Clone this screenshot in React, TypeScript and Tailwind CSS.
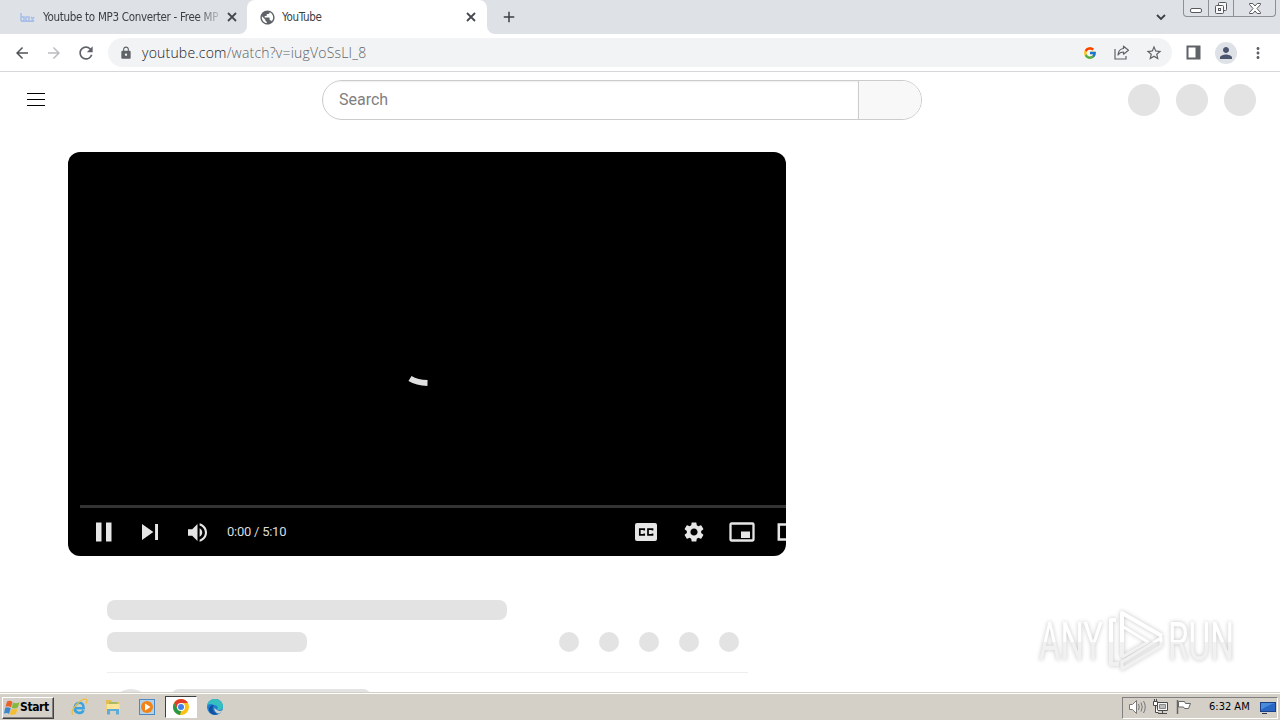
import React from 'react';
import {
    MdArrowBack, MdArrowForward, MdRefresh, MdLock, MdPublic, MdAdd,
    MdStarBorder, MdPerson, MdMoreVert, MdSettings,
} from 'react-icons/md';
import { FcGoogle } from 'react-icons/fc';

const CloseIcon = () => (
    <svg width="10" height="10" viewBox="0 0 10 10" className="shrink-0">
        <path d="M1 1l8 8M9 1L1 9" stroke="#45494d" strokeWidth="1.800" />
    </svg>
);

const TabStrip = () => (
    <div className="flex h-[34px] shrink-0 bg-white font-['DejaVu_Sans_Condensed','DejaVu_Sans',sans-serif] text-[11.5px] text-[#3c4043]">
        <div className="flex h-[34px] w-[247px] items-center rounded-br-[8px] bg-[#dee1e6] pl-5">
            <svg width="15" height="10" viewBox="0 0 15 10" className="shrink-0">
                <path d="M1 1v8M1 5h3v4H1M6 5h3v4H6zM11 5l3 4M14 5l-3 4M1 9.400h13" fill="none" stroke="#a5bde8" strokeWidth="1.500" />
            </svg>
            <div className="ml-2 w-[176px] pt-px whitespace-nowrap tracking-[-0.3px] [mask-image:linear-gradient(to_right,black_88%,rgba(0,0,0,0.2))]">
                Youtube to MP3 Converter - Free MP
            </div>
            <div className="ml-2">
                <CloseIcon />
            </div>
        </div>
        <div className="w-[240px] bg-[#dee1e6]">
            <div className="flex h-full items-center rounded-t-[8px] bg-white pl-3">
                <MdPublic className="size-[17px] text-[#5f6368]" />
                <span className="ml-1.5 pt-px tracking-[-0.3px]">YouTube</span>
                <div className="mr-[11px] ml-auto">
                    <CloseIcon />
                </div>
            </div>
        </div>
        <div className="flex flex-1 rounded-bl-[8px] bg-[#dee1e6]">
            <div className="flex flex-1 items-center pl-[13px]">
                <MdAdd className="size-[18px]" />
            </div>
            <svg width="10" height="7" viewBox="0 0 10 7" className="mt-[14px] mr-[17px]">
                <path d="M1 1l4 4 4-4" fill="none" stroke="#3c4043" strokeWidth="1.800" />
            </svg>
            <div className="mr-1 flex h-[17px] w-[93px] rounded-b-[4px] border border-t-0 border-[#8d9096] text-[#55595e]">
                <div className="flex w-[25px] items-center justify-center border-r border-[#8d9096]">
                    <svg width="13" height="13" viewBox="0 0 13 13" fill="none" stroke="currentColor">
                        <rect x="0.500" y="6.500" width="11" height="4" rx="1.500" fill="#fff" />
                    </svg>
                </div>
                <div className="flex w-[25px] items-center justify-center border-r border-[#8d9096]">
                    <svg width="13" height="13" viewBox="0 0 13 13" fill="#f8f8f9" stroke="currentColor">
                        <rect x="3.500" y="0.500" width="8" height="8" rx="1" />
                        <rect x="0.500" y="3.500" width="8" height="8" rx="1" />
                        <rect x="3.500" y="6.500" width="2" height="2" />
                    </svg>
                </div>
                <div className="flex flex-1 items-center justify-center">
                    <svg width="12" height="11" viewBox="0 0 12 11" fill="#fff" stroke="currentColor">
                        <path d="M.5 .5h3.300L6 3 8.200 .5h3.300v1L8 5.500l3.500 4v1H8.200L6 8l-2.200 2.500H.5v-1L4 5.500.5 1.500z" />
                    </svg>
                </div>
            </div>
        </div>
    </div>
);

const Toolbar = () => (
    <div className="flex h-[38px] shrink-0 items-center border-b border-[#d5d7da] bg-white pl-[13px] text-[#5f6368]">
        <MdArrowBack className="size-[18px] text-[#505458]" />
        <MdArrowForward className="ml-[14px] size-[18px] text-[#babcbe]" />
        <MdRefresh className="ml-[13px] size-5" />
        <div className="ml-[12px] flex h-[29px] w-[1064px] items-center rounded-full bg-[#f1f3f4] pl-[11px]">
            <MdLock className="size-[14px]" />
            <div className="ml-[9px] font-['Open_Sans',sans-serif] text-[14px] font-light tracking-[0.2px] text-[#5f6368]">
                <span className="text-[#202124]">youtube.com</span>/watch?v=iugVoSsLI_8
            </div>
            <div className="ml-auto flex items-center pr-[9px]">
                <FcGoogle className="size-[14px]" />
                <svg width="16" height="15" viewBox="0 0 16 15" fill="none" stroke="currentColor" strokeWidth="1.200" className="ml-[17px]">
                    <path d="M1 4v10h11v-3" />
                    <path d="M9.500 1.200l5 4-5 4V7C7 7 5.200 8 4 10c.2-3.500 2-6 5.500-6.500z" strokeLinejoin="round" />
                </svg>
                <MdStarBorder className="ml-[15px] size-[18px]" />
            </div>
        </div>
        <svg width="15" height="15" viewBox="0 0 15 15" className="ml-[14px]">
            <path d="M1.500 1.500h12v12h-12z" fill="none" stroke="currentColor" strokeWidth="2" />
            <path d="M9.500 1h4.500v13H9.500z" fill="currentColor" />
        </svg>
        <div className="ml-[14px] flex size-[22px] items-center justify-center rounded-full bg-[#dee1e6]">
            <MdPerson className="size-[18px] text-[#4a5570]" />
        </div>
        <MdMoreVert className="ml-[12px] size-[18px]" />
    </div>
);

const Masthead = () => (
    <div className="flex h-14 items-center">
        <div className="-mt-0.5 ml-[27px] flex h-[13px] w-[18px] flex-col justify-between">
            <div className="h-px bg-black" />
            <div className="h-px bg-black" />
            <div className="h-px bg-black" />
        </div>
        <div className="ml-[277px] flex h-10 w-[600px] overflow-hidden rounded-full border border-[#ccc]">
            <div className="flex w-[536px] items-center border-r border-[#ccc] pl-4 font-[Roboto,sans-serif] text-[16px] text-[#808080] shadow-[inset_0_1px_2px_#eee]">
                Search
            </div>
            <div className="flex-1 bg-[#f8f8f8]" />
        </div>
        <div className="mr-6 ml-auto flex gap-4">
            <div className="size-8 rounded-full bg-[#e3e3e3]" />
            <div className="size-8 rounded-full bg-[#e3e3e3]" />
            <div className="size-8 rounded-full bg-[#e3e3e3]" />
        </div>
    </div>
);

const Player = () => (
    <div className="mt-6 ml-[68px] flex h-[404px] w-[718px] flex-col overflow-hidden rounded-[12px] bg-black text-[#e6e6e6]">
        <div className="flex h-[353px] items-center justify-center">
            <svg width="64" height="64" viewBox="0 0 64 64" className="mt-[67px]">
                <path d="M15 48.500Q22 52.700 32.500 53" fill="none" stroke="#e0e0e0" strokeWidth="6" />
            </svg>
        </div>
        <div className="ml-3 h-[3px] shrink-0 bg-[#333]" />
        <div className="flex h-12 w-[766px] shrink-0 items-center pl-3">
            <div className="flex w-[47px] justify-center">
                <svg width="16" height="20" viewBox="0 0 16 20" fill="currentColor">
                    <path d="M0 .5h5.500v19H0zM10 .5h5.500v19H10z" />
                </svg>
            </div>
            <div className="flex w-[46px] justify-center">
                <svg width="16" height="16" viewBox="12 12 12 12" fill="currentColor">
                    <path d="M12 24l8.500-6L12 12zM21.800 12v12H24V12z" />
                </svg>
            </div>
            <div className="flex w-[47px] justify-center pl-px">
                <svg width="19" height="19" viewBox="8 9 18 18" fill="currentColor">
                    <path d="M8 21h4l5 5V10l-5 5H8zM19 14v8c1.480-.68 2.500-2.230 2.500-4 0-1.740-1.020-3.260-2.500-4zM19 11.290c2.890.86 5 3.540 5 6.710s-2.110 5.850-5 6.710v2.060c4.010-.91 7-4.490 7-8.770s-2.990-7.860-7-8.770z" />
                </svg>
            </div>
            <span className="ml-[7px] font-[Roboto,sans-serif] text-[13px] tracking-[-0.25px] text-[#ddd]">0:00 / 5:10</span>
            <div className="ml-auto flex">
                <div className="flex size-12 items-center justify-center">
                    <svg width="22" height="18" viewBox="0 0 22 18">
                        <rect width="22" height="18" rx="2" fill="currentColor" />
                        <path d="M9.200 7.500V6.200H4.800v5.600h4.400v-1.300M17.500 7.500V6.200H13v5.600h4.500v-1.300" fill="none" stroke="#000" strokeWidth="1.700" />
                    </svg>
                </div>
                <div className="flex size-12 items-center justify-center">
                    <MdSettings className="size-6" />
                </div>
                <div className="flex size-12 items-center justify-center">
                    <svg width="26" height="20" viewBox="0 0 26 20">
                        <rect x="1.500" y="1.500" width="23" height="17" rx="1" fill="none" stroke="currentColor" strokeWidth="2.300" />
                        <path d="M12 9.500h9V16h-9z" fill="currentColor" />
                    </svg>
                </div>
                <div className="flex size-12 items-center justify-center">
                    <svg width="26" height="18" viewBox="0 0 26 18">
                        <rect x="1.800" y="1.500" width="22.500" height="15" fill="none" stroke="currentColor" strokeWidth="2.500" />
                    </svg>
                </div>
                <div className="w-[20px]" />
            </div>
        </div>
    </div>
);

const InfoSkeleton = () => (
    <div className="mt-11 ml-[107px] w-[641px]">
        <div className="h-5 w-[400px] rounded-[8px] bg-[#e3e3e3]" />
        <div className="mt-3 flex h-5 items-center justify-between pr-[9px]">
            <div className="h-5 w-[200px] rounded-[8px] bg-[#e3e3e3]" />
            <div className="flex gap-5">
                {[0, 1, 2, 3, 4].map((i) => (
                    <div key={i} className="size-5 rounded-full bg-[#e3e3e3]" />
                ))}
            </div>
        </div>
        <div className="mt-5 border-t border-[#eee]" />
        <div className="mt-4 flex pl-1">
            <div className="size-10 rounded-full bg-[#e3e3e3]" />
            <div className="ml-5 h-5 w-[200px] rounded-[8px] bg-[#e3e3e3]" />
        </div>
    </div>
);

const Watermark = () => (
    <svg width="240" height="80" viewBox="0 0 240 80" className="absolute top-[602px] left-[1030px] drop-shadow-[0_0_2px_#c4c4c4]">
        <defs>
            <linearGradient id="fade" gradientUnits="userSpaceOnUse" x1="0" y1="0" x2="0" y2="80">
                <stop offset="0.500" stopColor="#fff" />
                <stop offset="0.500" stopColor="#f1f1f1" />
            </linearGradient>
        </defs>
        <g fill="url(#fade)" fontFamily="Roboto, sans-serif" fontSize="53">
            <text x="9" y="58" textLength="64" lengthAdjust="spacingAndGlyphs">ANY</text>
            <text x="138" y="58" textLength="66" lengthAdjust="spacingAndGlyphs">RUN</text>
        </g>
        <g fill="none" stroke="url(#fade)" strokeWidth="4" strokeLinejoin="round">
            <path d="M92 55V11l40 23" />
            <path d="M86 18h-5v44h8" strokeWidth="4" />
            <path d="M92 55l26-15-26-16M92 67l39-23v-8L92 60z" strokeWidth="3" />
        </g>
    </svg>
);

const Taskbar = () => (
    <div className="flex h-[28px] shrink-0 items-center border-t border-[#d4d0c8] bg-[#d4d0c8] shadow-[inset_0_1px_0_#fff]">
        <div className="mt-0.5 ml-0.5 flex h-[22px] w-[52px] items-center border border-t-white border-r-[#404040] border-b-[#404040] border-l-white pl-px shadow-[inset_-1px_-1px_0_#808080]">
            <svg width="16" height="16" viewBox="0 0 16 16" className="shrink-0">
                <path d="M3 1.500Q6 0 8.500 2L7 7.500Q4.500 5.500 1.500 6.800z" fill="#e8622c" />
                <path d="M9.200 2.500Q12 4 15.500 2.200L13.800 7.600Q10.500 9.200 7.700 7.800z" fill="#85b93c" />
                <path d="M1.200 7.700Q4.200 6.500 6.700 8.400L5 14Q3 12.300 0 13.600z" fill="#3b87d0" />
                <path d="M7.400 8.700Q10.200 10.200 13.500 8.600L12 14Q8.800 15.500 5.800 14.200z" fill="#f5bd30" />
            </svg>
            <span className="-mt-px font-['DejaVu_Sans_Condensed','DejaVu_Sans',sans-serif] text-[12px] font-bold tracking-[-0.4px] text-black">Start</span>
        </div>
        <svg width="18" height="18" viewBox="0 0 18 18" className="ml-4" fill="none">
            <path d="M5 10.200h8.600C14 2.500 5.200 3.500 4.700 9.500c-.4 6 7 7 8.800 2.700" stroke="#3aa4e0" strokeWidth="2.600" />
            <path d="M3 16.500C-1.500 13 12-1 16.500 1.500c1 .8.300 2.500-.5 4" stroke="#edbd3a" strokeWidth="1.200" />
        </svg>
        <svg width="18" height="18" viewBox="0 0 18 18" className="ml-4">
            <path d="M2 2h5l1 2h7v9H2z" fill="#e5bd55" />
            <path d="M2.500 6h13v7h-13z" fill="#fbe59a" />
            <path d="M5 4.500h8v1H5z" fill="#6cb774" />
            <path d="M3 16.500V11h12v5.500h-3V13H6v3.500z" fill="#5cacd7" />
        </svg>
        <svg width="18" height="18" viewBox="0 0 18 18" className="ml-4">
            <rect x="1.500" y="1.500" width="15" height="15" fill="#b5d1e8" stroke="#4b8ac4" />
            <circle cx="9" cy="9" r="6" fill="#f08418" />
            <path d="M7 5.500l5.500 3.500L7 12.500z" fill="#fff" />
        </svg>
        <div className="ml-[9px] flex h-[22px] w-8 items-center justify-center border border-t-[#404040] border-r-white border-b-white border-l-[#404040] bg-white">
            <svg width="16" height="16" viewBox="0 0 16 16">
                <circle cx="8" cy="8" r="8" fill="#fbc116" />
                <path d="M8 8L4.500 10 1.100 4A8 8 0 0 1 14.900 4H8z" fill="#e33b2e" />
                <path d="M1.100 4L4.500 10 8 12l-1 4A8 8 0 0 1 1.100 4z" fill="#279847" />
                <circle cx="8" cy="8" r="4" fill="#fff" />
                <circle cx="8" cy="8" r="3" fill="#4080ea" />
            </svg>
        </div>
        <svg width="18" height="18" viewBox="0 0 18 18" className="ml-[9px]">
            <circle cx="9" cy="9" r="8" fill="#1c7fd0" />
            <path d="M1 8C2 3 5 1 9 1c5 0 8 3.500 8 7.500 0 3-3 4-6 3.500 1.500-2 .5-5-3-5C5 5 2 6 1 8z" fill="#35bfc0" />
            <path d="M8 7c-3 3-1 8 4 9-5 2-9-1-9-5 0-2 2-4 5-4z" fill="#134f9f" />
            <path d="M11 12c2 1.500 4 1 5.500 0-.5 1.500-2 3-4 3.500C9.500 15 8 12 8.500 10z" fill="#d4d0c8" />
        </svg>
        <div className="mt-0.5 mr-0.5 ml-auto flex h-[22px] w-[156px] items-center border border-t-[#808080] border-r-white border-b-white border-l-[#808080] pl-1.5">
            <svg width="18" height="16" viewBox="0 0 18 16" className="-mt-0.5" fill="none" stroke="#777">
                <path d="M.5 5.500h3l4-4v13l-4-4h-3z" fill="#fff" />
                <path d="M9.500 5q1.500 3 0 6M12 3.500q2.500 4.500 0 9M14.500 2q3.500 6 0 12" />
            </svg>
            <svg width="17" height="16" viewBox="0 0 17 16" className="-mt-0.5 ml-[5px]" fill="none" stroke="#4a4a4a">
                <path d="M5.500 3.500h10v8h-10zM6 14.500h9M10.500 12v2" fill="#f5f5f5" />
                <path d="M7.500 5.500h6v4h-6z" fill="#bbb" stroke="#888" />
                <path d="M1.500 2.500h4v4h-4zM2.500 0v2M4.500 0v2M3.500 7v6.500h3" fill="#fff" />
            </svg>
            <svg width="17" height="16" viewBox="0 0 17 16" className="-mt-0.5 ml-1.5" fill="#fff" stroke="#666">
                <path d="M2.500 1v14" strokeWidth="1.500" />
                <path d="M3.500 2.500h6l1 2h5l-2 5h-4l-1-1.500h-5z" />
            </svg>
            <span className="ml-[17px] font-['DejaVu_Sans_Condensed','DejaVu_Sans',sans-serif] text-[11px] whitespace-nowrap text-black">6:32 AM</span>
            <svg width="16" height="14" viewBox="0 0 16 14" className="mr-px ml-auto">
                <path d="M0 1h16v10H0z" fill="#1c3f86" />
                <path d="M1 2h14v8H1z" fill="#2868c4" />
                <path d="M1 2h14Q8 4 1 9z" fill="#4a8cdc" />
                <path d="M2 12h5v1H2z" fill="#26365a" />
            </svg>
        </div>
    </div>
);

const App = () => (
    <div className="relative flex h-[720px] w-[1280px] flex-col overflow-hidden bg-white">
        <TabStrip />
        <Toolbar />
        <div className="min-h-0 flex-1 overflow-hidden bg-white">
            <Masthead />
            <Player />
            <InfoSkeleton />
        </div>
        <Taskbar />
        <Watermark />
    </div>
);

export default App;
